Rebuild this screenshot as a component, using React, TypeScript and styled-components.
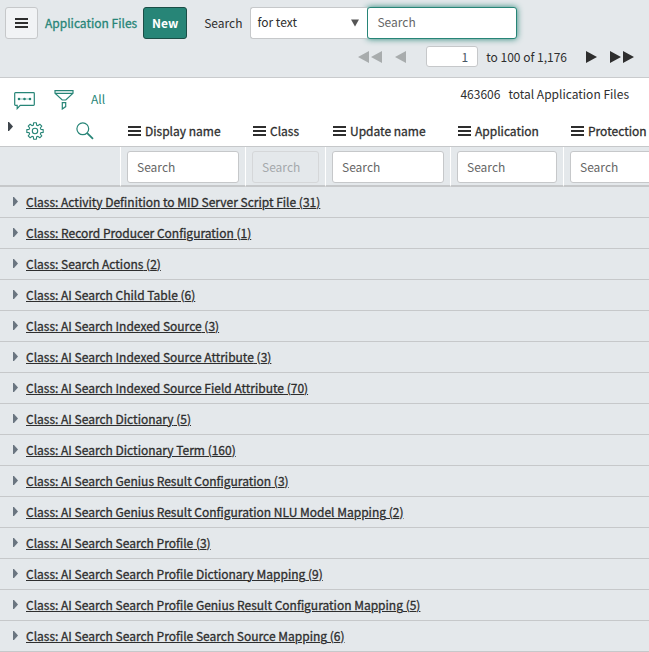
import React from 'react';
import styled, { createGlobalStyle, css } from 'styled-components';

const GlobalStyle = createGlobalStyle`
  *, *::before, *::after { box-sizing: border-box; }
  body {
    margin: 0;
    background: #e4e8eb;
    color: #2e2e2e;
    font-family: "Noto Sans CJK SC", "Noto Sans", sans-serif;
    font-size: 12px;
    line-height: 18px;
  }
  button, input, select { font: inherit; color: inherit; }
`;

const semiBold = css`
  font-weight: 400;
  -webkit-text-stroke: 0.3px currentColor;
`;

const Page = styled.main`
  overflow-x: hidden;
`;

const Header = styled.header`
  padding: 6px 5px 10px;
  background: #e4e8eb;
  border-bottom: 1px solid #c9cbcd;
`;

const ToolRow = styled.div`
  display: flex;
  align-items: center;
`;

const MenuButton = styled.button`
  display: flex;
  align-items: center;
  justify-content: center;
  width: 33px;
  height: 32px;
  margin-top: 1px;
  padding: 0;
  background: #f1f3f5;
  border: 1px solid #c6c8ca;
  border-radius: 3px;
  color: #2e2e2e;
`;

const Title = styled.h1`
  margin: 0 6px 0 7px;
  font-size: 12px;
  ${semiBold}
  color: #278577;
  white-space: nowrap;
`;

const NewButton = styled.button`
  width: 44px;
  height: 32px;
  margin-top: 1px;
  padding: 0;
  background: #278577;
  border: 1px solid #1b4d46;
  border-radius: 3px;
  color: #fff;
  font-weight: 700;
`;

const SearchLabel = styled.label`
  margin: 0 8px 0 17px;
`;

const SelectWrap = styled.div`
  position: relative;
  width: 117px;
`;

const Select = styled.select`
  display: block;
  width: 100%;
  height: 32px;
  padding: 0 6px 2px;
  appearance: none;
  background: #fff;
  border: 1px solid #c6c8ca;
  border-right: 0;
  border-radius: 3px 0 0 3px;
`;

const SelectArrow = styled.svg`
  position: absolute;
  top: 12px;
  right: 8px;
  pointer-events: none;
`;

const fieldBase = css`
  height: 32px;
  padding: 0 9px 2px;
  background: #fff;
  border: 1px solid #c6c8ca;
  border-radius: 3px;
  outline: none;
  &::placeholder { color: #666; opacity: 1; }
`;

const SearchInput = styled.input`
  ${fieldBase}
  width: 150px;
  border-color: #278577;
  box-shadow: 0 0 6px #278577;
`;

const Pager = styled.nav`
  display: flex;
  align-items: center;
  justify-content: flex-end;
  gap: 13px;
  margin-top: 7px;
  padding-right: 10px;
`;

const PagerButton = styled.button`
  display: flex;
  padding: 0;
  background: none;
  border: 0;
  color: #2e2e2e;
  &:disabled { color: #a8acad; }
`;

const PageRange = styled.label`
  display: flex;
  align-items: center;
  gap: 8px;
  padding: 0 6px 0 7px;
`;

const PageInput = styled.input`
  width: 52px;
  height: 21px;
  padding: 0 9px 1px;
  background: #fff;
  border: 1px solid #c6c8ca;
  border-radius: 3px;
  color: #485563;
  text-align: right;
`;

const ListBar = styled.section`
  display: flex;
  align-items: center;
  height: 36px;
  padding: 8px 20px 0 14px;
  background: #fff;
`;

const IconButton = styled.button<{ $dark?: boolean }>`
  display: flex;
  padding: 0;
  background: none;
  border: 0;
  color: ${({ $dark }) => ($dark ? '#3f464d' : '#278577')};
`;

const FilterGroup = styled.div`
  display: flex;
  align-items: flex-end;
  gap: 19px;
`;

const AllLink = styled.a`
  align-self: flex-start;
  margin-left: -2px;
  color: #278577;
  text-decoration: none;
`;

const Total = styled.p`
  margin: 0 0 12px auto;
`;

const Count = styled.span`
  margin-right: 8px;
`;

const Table = styled.table`
  width: 100%;
  min-width: 704px;
  table-layout: fixed;
  border-collapse: separate;
  border-spacing: 0;
`;

const HeadCell = styled.th`
  height: 33px;
  padding: 1px 7px 0;
  background: #fff;
  border-bottom: 1px solid #c6c8ca;
  font-weight: 400;
  text-align: left;
  white-space: nowrap;
`;

const HeadContent = styled.span`
  display: flex;
  align-items: center;
  gap: 4px;
  ${semiBold}
`;

const TableTools = styled.span`
  display: flex;
  align-items: flex-start;
  gap: 12px;
`;

const SearchTools = styled.span`
  display: flex;
  gap: 32px;
`;

const SearchCell = styled.td`
  height: 40px;
  padding: 4px 6px 2px;
  border-right: 1px solid #fff;
  border-bottom: 2px solid #c6c8ca;
`;

const ColumnInput = styled.input`
  ${fieldBase}
  display: block;
  width: 100%;
  &:disabled { background: #e4e8eb; border-color: #d5d7d9; }
  &:disabled::placeholder { color: #a5a9ac; }
`;

const GroupCell = styled.td`
  height: 31px;
  padding: 0 12px 1px;
  border-bottom: 1px solid #c6c8ca;
`;

const GroupContent = styled.div`
  display: flex;
  align-items: center;
  gap: 7px;
  color: #6a7580;
`;

const GroupLink = styled.a`
  color: #2e2e2e;
  ${semiBold}
  text-decoration: underline;
  white-space: nowrap;
`;

const Bars = () => (
  <svg width="13" height="10" viewBox="0 0 13 10" aria-hidden="true">
    <path d="M0 1h13M0 5h13M0 9h13" stroke="currentColor" strokeWidth="2" />
  </svg>
);

const Caret = () => (
  <svg width="7" height="9" viewBox="0 0 7 9" aria-hidden="true">
    <path d="M1 0v9h1l4-4.5L2 0z" fill="currentColor" />
  </svg>
);

const Arrow = ({ back, twice }: { back?: boolean; twice?: boolean }) => {
  const width = twice ? 24 : 11;
  return (
    <svg width={width} height="12" viewBox={`0 0 ${width} 12`} aria-hidden="true">
      <path
        fill="currentColor"
        d={back
          ? `M11 0v12L0 6z${twice ? 'M24 0v12L13 6z' : ''}`
          : `M0 0v12l11-6z${twice ? 'M13 0v12l11-6z' : ''}`}
      />
    </svg>
  );
};

const Chat = () => (
  <svg width="21" height="18" viewBox="0 0 21 18" fill="none" stroke="currentColor" aria-hidden="true">
    <path d="M1.5.7h18q.8 0 .8.8v11q0 .8-.8.8H6.2L3.2 16.6v-3.3H1.5q-.8 0-.8-.8v-11q0-.8.8-.8z" strokeWidth="1.2" />
    <path d="M5 7h.01M10.5 7h.01M16 7h.01" strokeWidth="2.6" strokeLinecap="round" />
    <path d="M5 7h11" strokeWidth=".5" />
  </svg>
);

const Funnel = () => (
  <svg width="20" height="20" viewBox="0 0 20 20" fill="none" stroke="currentColor" strokeWidth="1.2" aria-hidden="true">
    <path d="M1 .7h18v2.5L11.8 10H8.2L1 3.2zM1 3.4h18M8.3 12.6h3.4v4l-3.4 2.4z" />
  </svg>
);

const gearPath = (() => {
  const points: string[] = [];
  for (let i = 0; i < 8; i += 1) {
    const a = (i * Math.PI) / 4;
    [[-0.27, 6.1], [-0.17, 8.3], [0.17, 8.3], [0.27, 6.1]].forEach(([d, r]) => {
      points.push(`${(9 + r * Math.sin(a + d)).toFixed(2)} ${(9 - r * Math.cos(a + d)).toFixed(2)}`);
    });
  }
  return `M${points.join('L')}Z`;
})();

const Gear = () => (
  <svg width="18" height="18" viewBox="0 0 18 18" fill="none" stroke="currentColor" strokeWidth="1.1" strokeLinejoin="round" aria-hidden="true">
    <path d={gearPath} />
    <circle cx="9" cy="9" r="2.7" />
  </svg>
);

const Magnifier = () => (
  <svg width="18" height="18" viewBox="0 0 18 18" fill="none" stroke="currentColor" aria-hidden="true">
    <circle cx="6.8" cy="6.8" r="5.9" strokeWidth="1.2" />
    <path d="M11.2 11.2l5.8 5.6" strokeWidth="1.8" />
  </svg>
);

const columns = [
  { name: 'Display name', width: 125 },
  { name: 'Class', width: 80, disabled: true },
  { name: 'Update name', width: 125 },
  { name: 'Application', width: 113 },
  { name: 'Protection policy' },
];

const groups: [string, number][] = [
  ['Activity Definition to MID Server Script File', 31],
  ['Record Producer Configuration', 1],
  ['Search Actions', 2],
  ['AI Search Child Table', 6],
  ['AI Search Indexed Source', 3],
  ['AI Search Indexed Source Attribute', 3],
  ['AI Search Indexed Source Field Attribute', 70],
  ['AI Search Dictionary', 5],
  ['AI Search Dictionary Term', 160],
  ['AI Search Genius Result Configuration', 3],
  ['AI Search Genius Result Configuration NLU Model Mapping', 2],
  ['AI Search Search Profile', 3],
  ['AI Search Search Profile Dictionary Mapping', 9],
  ['AI Search Search Profile Genius Result Configuration Mapping', 5],
  ['AI Search Search Profile Search Source Mapping', 6],
];

export default function App() {
  return (
    <Page>
      <GlobalStyle />
      <Header>
        <ToolRow>
          <MenuButton aria-label="List menu"><Bars /></MenuButton>
          <Title>Application Files</Title>
          <NewButton>New</NewButton>
          <SearchLabel htmlFor="search-field">Search</SearchLabel>
          <SelectWrap>
            <Select id="search-field"><option>for text</option></Select>
            <SelectArrow width="8" height="8" viewBox="0 0 8 8" aria-hidden="true">
              <path d="M0 .5h8L4 7.5z" fill="#555" />
            </SelectArrow>
          </SelectWrap>
          <SearchInput placeholder="Search" aria-label="Search text" />
        </ToolRow>
        <Pager aria-label="Pages">
          <PagerButton disabled aria-label="First page"><Arrow back twice /></PagerButton>
          <PagerButton disabled aria-label="Previous page"><Arrow back /></PagerButton>
          <PageRange>
            <PageInput defaultValue="1" />
            to 100 of 1,176
          </PageRange>
          <PagerButton aria-label="Next page"><Arrow /></PagerButton>
          <PagerButton aria-label="Last page"><Arrow twice /></PagerButton>
        </Pager>
      </Header>
      <ListBar>
        <FilterGroup>
          <IconButton aria-label="Activity stream"><Chat /></IconButton>
          <IconButton aria-label="Filter"><Funnel /></IconButton>
          <AllLink href="#all">All</AllLink>
        </FilterGroup>
        <Total><Count>463606</Count>total Application Files</Total>
      </ListBar>
      <Table>
        <colgroup>
          <col width={121} />
          {columns.map((c) => <col key={c.name} width={c.width} />)}
        </colgroup>
        <thead>
          <tr>
            <HeadCell>
              <TableTools>
                <IconButton $dark aria-label="Expand all groups"><Caret /></IconButton>
                <SearchTools>
                  <IconButton aria-label="List settings"><Gear /></IconButton>
                  <IconButton aria-label="Toggle column search"><Magnifier /></IconButton>
                </SearchTools>
              </TableTools>
            </HeadCell>
            {columns.map((c) => (
              <HeadCell key={c.name} scope="col"><HeadContent><Bars />{c.name}</HeadContent></HeadCell>
            ))}
          </tr>
        </thead>
        <tbody>
          <tr>
            <SearchCell />
            {columns.map((c) => (
              <SearchCell key={c.name}>
                <ColumnInput placeholder="Search" aria-label={`Search ${c.name}`} disabled={c.disabled} />
              </SearchCell>
            ))}
          </tr>
          {groups.map(([name, count]) => (
            <tr key={name}>
              <GroupCell colSpan={6}>
                <GroupContent>
                  <Caret />
                  <GroupLink href="#group">Class: {name} ({count})</GroupLink>
                </GroupContent>
              </GroupCell>
            </tr>
          ))}
        </tbody>
      </Table>
    </Page>
  );
}
